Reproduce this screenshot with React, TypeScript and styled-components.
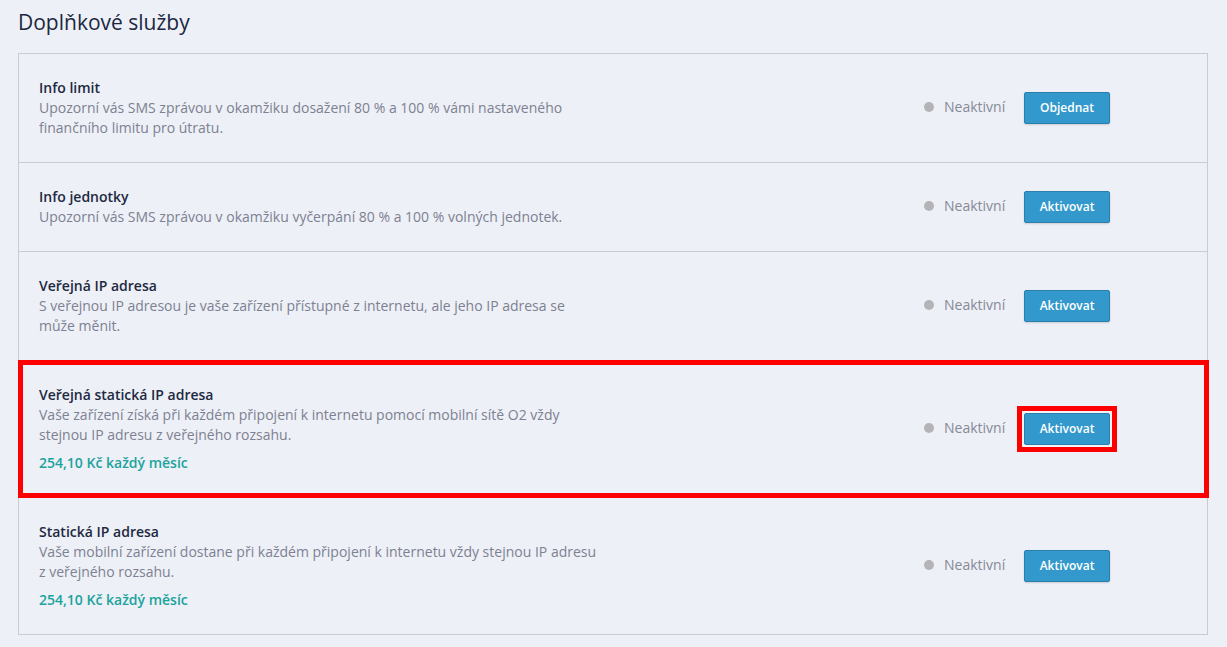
import React from "react";
import styled, { createGlobalStyle } from "styled-components";

const GlobalStyle = createGlobalStyle`
  html, body {
    margin: 0;
    padding: 0;
    background: #edf0f7;
  }
  body {
    font-family: "Open Sans", "Noto Sans", "Liberation Sans", sans-serif;
    -webkit-font-smoothing: antialiased;
  }
`;

const Page = styled.div`
  padding: 0 19px 12px 18px;
`;

const Heading = styled.h1`
  margin: 0;
  padding: 8px 0 0 0;
  height: 53px;
  box-sizing: border-box;
  font-size: 21px;
  line-height: 28px;
  font-weight: 500;
  color: #1b2740;
`;

const List = styled.div`
  border: 1px solid #c9ccd2;
  display: flex;
  flex-direction: column;
`;

const Row = styled.div<{ $highlight?: boolean; $last?: boolean }>`
  position: relative;
  display: flex;
  align-items: center;
  padding: 24px 97px 24px 20px;
  border-bottom: ${(p) => (p.$last ? "none" : "1px solid #c9ccd2")};

  ${(p) =>
    p.$highlight &&
    `
    &::after {
      content: "";
      position: absolute;
      top: -1px;
      left: -1px;
      right: -2px;
      bottom: -1px;
      border: 5px solid #ff0000;
      pointer-events: none;
    }
  `}
`;

const Info = styled.div`
  flex: 1;
  min-width: 0;
`;

const Title = styled.div`
  font-size: 14px;
  line-height: 20px;
  font-weight: 600;
  color: #1d2940;
`;

const Description = styled.div`
  max-width: 561px;
  font-size: 14px;
  line-height: 20px;
  color: #7d8191;
`;

const Price = styled.div`
  margin-top: 8px;
  font-size: 14px;
  line-height: 20px;
  font-weight: 600;
  color: #1ca39c;
`;

const Actions = styled.div`
  display: flex;
  align-items: center;
  flex-shrink: 0;
`;

const Status = styled.div`
  display: flex;
  align-items: center;
  width: 100px;
  margin-top: -3px;
  font-size: 14px;
  line-height: 20px;
  color: #858a96;
`;

const Dot = styled.span`
  width: 10px;
  height: 10px;
  border-radius: 50%;
  background: #b4b4b6;
  margin-right: 10px;
`;

const Button = styled.button<{ $highlight?: boolean }>`
  position: relative;
  width: 86px;
  height: 32px;
  padding: 0;
  border: 1px solid #2a7fad;
  border-radius: 2px;
  background: #3399cc;
  color: #ffffff;
  font-family: "Open Sans", "Noto Sans", "Liberation Sans", sans-serif;
  font-size: 12px;
  font-weight: 600;
  line-height: 30px;
  box-shadow: ${(p) =>
    p.$highlight ? "0 0 0 2px #f3f4f8" : "0 1px 2px rgba(0, 0, 0, 0.15)"};
  cursor: pointer;

  ${(p) =>
    p.$highlight &&
    `
    &::after {
      content: "";
      position: absolute;
      top: -8px;
      left: -8px;
      right: -8px;
      bottom: -8px;
      border: 5px solid #ff0000;
      pointer-events: none;
    }
  `}
`;

type Service = {
  title: string;
  description: string;
  price?: string;
  action: string;
  highlight?: boolean;
};

const services: Service[] = [
  {
    title: "Info limit",
    description:
      "Upozorní vás SMS zprávou v okamžiku dosažení 80 % a 100 % vámi nastaveného finančního limitu pro útratu.",
    action: "Objednat",
  },
  {
    title: "Info jednotky",
    description:
      "Upozorní vás SMS zprávou v okamžiku vyčerpání 80 % a 100 % volných jednotek.",
    action: "Aktivovat",
  },
  {
    title: "Veřejná IP adresa",
    description:
      "S veřejnou IP adresou je vaše zařízení přístupné z internetu, ale jeho IP adresa se může měnit.",
    action: "Aktivovat",
  },
  {
    title: "Veřejná statická IP adresa",
    description:
      "Vaše zařízení získá při každém připojení k internetu pomocí mobilní sítě O2 vždy stejnou IP adresu z veřejného rozsahu.",
    price: "254,10 Kč každý měsíc",
    action: "Aktivovat",
    highlight: true,
  },
  {
    title: "Statická IP adresa",
    description:
      "Vaše mobilní zařízení dostane při každém připojení k internetu vždy stejnou IP adresu z veřejného rozsahu.",
    price: "254,10 Kč každý měsíc",
    action: "Aktivovat",
  },
];

export default function App() {
  return (
    <>
      <GlobalStyle />
      <Page>
        <Heading>Doplňkové služby</Heading>
        <List>
          {services.map((s, i) => (
            <Row
              key={s.title}
              $highlight={s.highlight}
              $last={i === services.length - 1}
            >
              <Info>
                <Title>{s.title}</Title>
                <Description>{s.description}</Description>
                {s.price && <Price>{s.price}</Price>}
              </Info>
              <Actions>
                <Status>
                  <Dot />
                  Neaktivní
                </Status>
                <Button $highlight={s.highlight}>{s.action}</Button>
              </Actions>
            </Row>
          ))}
        </List>
      </Page>
    </>
  );
}
